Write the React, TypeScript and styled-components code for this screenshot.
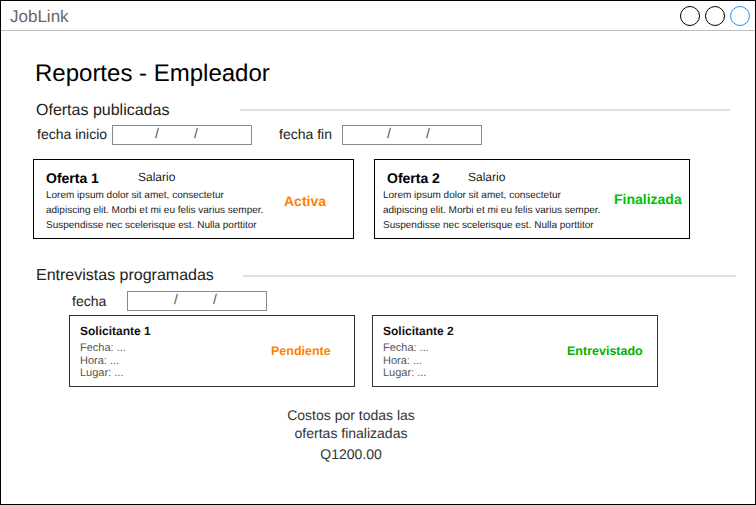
import React from "react";
import styled, { createGlobalStyle } from "styled-components";

const GlobalStyle = createGlobalStyle`
  html, body { margin: 0; padding: 0; background: #fff; }
  body {
    font-family: "Liberation Sans", Arial, Helvetica, sans-serif;
    text-rendering: geometricPrecision;
  }
  *, *::before, *::after { box-sizing: border-box; }
`;

const Frame = styled.div`
  width: 756px;
  height: 505px;
  border: 1px solid #000;
  display: flex;
  flex-direction: column;
  overflow: hidden;
  background: #fff;
`;

const TitleBar = styled.header`
  flex: none;
  height: 30px;
  border-bottom: 1px solid #c0c0c0;
  display: flex;
  align-items: flex-start;
  justify-content: space-between;
  padding: 0 5px 0 9px;
`;

const AppName = styled.div`
  margin-top: 6px;
  font-size: 17px;
  line-height: 20px;
  color: #666;
`;

const WindowButtons = styled.div`
  margin-top: 5px;
  display: flex;
  gap: 5px;
`;

const WindowButton = styled.span<{ $color: string }>`
  width: 20px;
  height: 20px;
  border-radius: 50%;
  border: 1px solid ${(p) => p.$color};
`;

const Main = styled.main`
  flex: 1;
  display: flex;
  flex-direction: column;
`;

const PageTitle = styled.h1`
  margin: 29px 0 0 34px;
  font-size: 24px;
  line-height: 28px;
  font-weight: normal;
  color: #000;
`;

const SectionHeader = styled.div<{ $top: number }>`
  margin-top: ${(p) => p.$top}px;
  padding-left: 35px;
  display: flex;
  align-items: flex-start;
`;

const SectionName = styled.h2`
  margin: 0;
  font-size: 16px;
  line-height: 20px;
  font-weight: normal;
  color: #222;
  white-space: nowrap;
`;

const SectionRule = styled.div<{ $left: number; $right: number; $top: number }>`
  flex: 1;
  height: 2px;
  background: #dedede;
  margin: ${(p) => p.$top}px ${(p) => p.$right}px 0 ${(p) => p.$left}px;
`;

const FilterRow = styled.div<{ $top: number; $left: number }>`
  margin-top: ${(p) => p.$top}px;
  padding-left: ${(p) => p.$left}px;
  display: flex;
  align-items: flex-start;
  gap: 27px;
`;

const Field = styled.div`
  display: flex;
  align-items: flex-start;
`;

const FieldLabel = styled.label<{ $width: number; $top: number }>`
  width: ${(p) => p.$width}px;
  margin-top: ${(p) => p.$top}px;
  font-size: 14px;
  line-height: 16px;
  color: #222;
  white-space: nowrap;
`;

const DateBox = styled.div<{ $top: number; $slashStart: number }>`
  width: 140px;
  height: 20px;
  margin-top: ${(p) => p.$top}px;
  border: 1px solid #8a8a8a;
  display: flex;
  gap: 35px;
  padding-left: ${(p) => p.$slashStart}px;
  font-size: 14px;
  line-height: 14px;
  color: #555;
`;

const CardRow = styled.div<{ $top: number; $left: number; $gap: number }>`
  margin-top: ${(p) => p.$top}px;
  padding-left: ${(p) => p.$left}px;
  display: flex;
  gap: ${(p) => p.$gap}px;
`;

const OfferCard = styled.div<{ $width: number; $pad: number }>`
  width: ${(p) => p.$width}px;
  height: 80px;
  border: 1px solid #000;
  padding: 10px 0 0 ${(p) => p.$pad}px;
  display: flex;
  align-items: flex-start;
`;

const OfferBody = styled.div<{ $width: number }>`
  width: ${(p) => p.$width}px;
  flex: none;
`;

const OfferHead = styled.div<{ $indent: number }>`
  display: flex;
  align-items: flex-start;
  padding-left: ${(p) => p.$indent}px;
`;

const OfferName = styled.div<{ $width: number }>`
  width: ${(p) => p.$width}px;
  font-size: 14px;
  line-height: 16px;
  font-weight: bold;
  color: #000;
`;

const Salary = styled.div`
  font-size: 12px;
  line-height: 14px;
  color: #222;
`;

const Lorem = styled.p`
  margin: 2px 0 0;
  font-size: 10px;
  line-height: 15px;
  color: #222;
  white-space: nowrap;
`;

const Status = styled.div<{ $color: string; $top: number; $size: number }>`
  margin-top: ${(p) => p.$top}px;
  font-size: ${(p) => p.$size}px;
  line-height: ${(p) => Math.round(p.$size + 2)}px;
  font-weight: bold;
  color: ${(p) => p.$color};
  white-space: nowrap;
`;

const InterviewCard = styled.div`
  width: 286px;
  height: 72px;
  border: 1px solid #333;
  padding: 8px 0 0 10px;
  display: flex;
  align-items: flex-start;
`;

const InterviewBody = styled.div<{ $width: number }>`
  width: ${(p) => p.$width}px;
  flex: none;
`;

const ApplicantName = styled.div`
  font-size: 12px;
  line-height: 14px;
  font-weight: bold;
  color: #111;
`;

const Details = styled.div`
  margin-top: 4px;
  font-size: 11px;
  line-height: 12.5px;
  color: #555;
`;

const Costs = styled.div`
  margin: 19px 0 0 269px;
  width: 162px;
  text-align: center;
  color: #333;
  font-size: 14px;
  line-height: 18px;
`;

const Amount = styled.div`
  margin-top: 3px;
`;

type Offer = {
  name: string;
  status: string;
  color: string;
  width: number;
  pad: number;
  indent: number;
  nameWidth: number;
  bodyWidth: number;
  statusTop: number;
};

const offers: Offer[] = [
  { name: "Oferta 1", status: "Activa", color: "#ff8000", width: 321, pad: 12, indent: 0, nameWidth: 92, bodyWidth: 238, statusTop: 23 },
  { name: "Oferta 2", status: "Finalizada", color: "#00c000", width: 316, pad: 8, indent: 4, nameWidth: 81, bodyWidth: 231, statusTop: 21 },
];

const interviews = [
  { name: "Solicitante 1", status: "Pendiente", color: "#ff8000", bodyWidth: 191 },
  { name: "Solicitante 2", status: "Entrevistado", color: "#00b000", bodyWidth: 184 },
];

const Slashes = () => (
  <>
    <span>/</span>
    <span>/</span>
  </>
);

export default function App() {
  return (
    <>
      <GlobalStyle />
      <Frame>
        <TitleBar>
          <AppName>JobLink</AppName>
          <WindowButtons>
            <WindowButton $color="#000" />
            <WindowButton $color="#000" />
            <WindowButton $color="#1e90ff" />
          </WindowButtons>
        </TitleBar>
        <Main>
          <PageTitle>Reportes - Empleador</PageTitle>

          <SectionHeader $top={13}>
            <SectionName>Ofertas publicadas</SectionName>
            <SectionRule $left={71} $right={25} $top={8} />
          </SectionHeader>

          <FilterRow $top={2} $left={36}>
            <Field>
              <FieldLabel $width={75} $top={3}>fecha inicio</FieldLabel>
              <DateBox $top={2} $slashStart={42}>
                <Slashes />
              </DateBox>
            </Field>
            <Field>
              <FieldLabel $width={63} $top={3}>fecha fin</FieldLabel>
              <DateBox $top={2} $slashStart={44}>
                <Slashes />
              </DateBox>
            </Field>
          </FilterRow>

          <CardRow $top={14} $left={32} $gap={20}>
            {offers.map((o) => (
              <OfferCard key={o.name} $width={o.width} $pad={o.pad}>
                <OfferBody $width={o.bodyWidth}>
                  <OfferHead $indent={o.indent}>
                    <OfferName $width={o.nameWidth}>{o.name}</OfferName>
                    <Salary>Salario</Salary>
                  </OfferHead>
                  <Lorem>
                    Lorem ipsum dolor sit amet, consectetur
                    <br />
                    adipiscing elit. Morbi et mi eu felis varius semper.
                    <br />
                    Suspendisse nec scelerisque est. Nulla porttitor
                  </Lorem>
                </OfferBody>
                <Status $color={o.color} $top={o.statusTop} $size={14}>
                  {o.status}
                </Status>
              </OfferCard>
            ))}
          </CardRow>

          <SectionHeader $top={27}>
            <SectionName>Entrevistas programadas</SectionName>
            <SectionRule $left={29} $right={19} $top={9} />
          </SectionHeader>

          <FilterRow $top={5} $left={71}>
            <Field>
              <FieldLabel $width={55} $top={1.5}>fecha</FieldLabel>
              <DateBox $top={0} $slashStart={46}>
                <Slashes />
              </DateBox>
            </Field>
          </FilterRow>

          <CardRow $top={4} $left={68} $gap={17}>
            {interviews.map((i) => (
              <InterviewCard key={i.name}>
                <InterviewBody $width={i.bodyWidth}>
                  <ApplicantName>{i.name}</ApplicantName>
                  <Details>
                    Fecha: ...
                    <br />
                    Hora: ...
                    <br />
                    Lugar: ...
                  </Details>
                </InterviewBody>
                <Status $color={i.color} $top={20} $size={12.5}>
                  {i.status}
                </Status>
              </InterviewCard>
            ))}
          </CardRow>

          <Costs>
            Costos por todas las
            <br />
            ofertas finalizadas
            <Amount>Q1200.00</Amount>
          </Costs>
        </Main>
      </Frame>
    </>
  );
}
